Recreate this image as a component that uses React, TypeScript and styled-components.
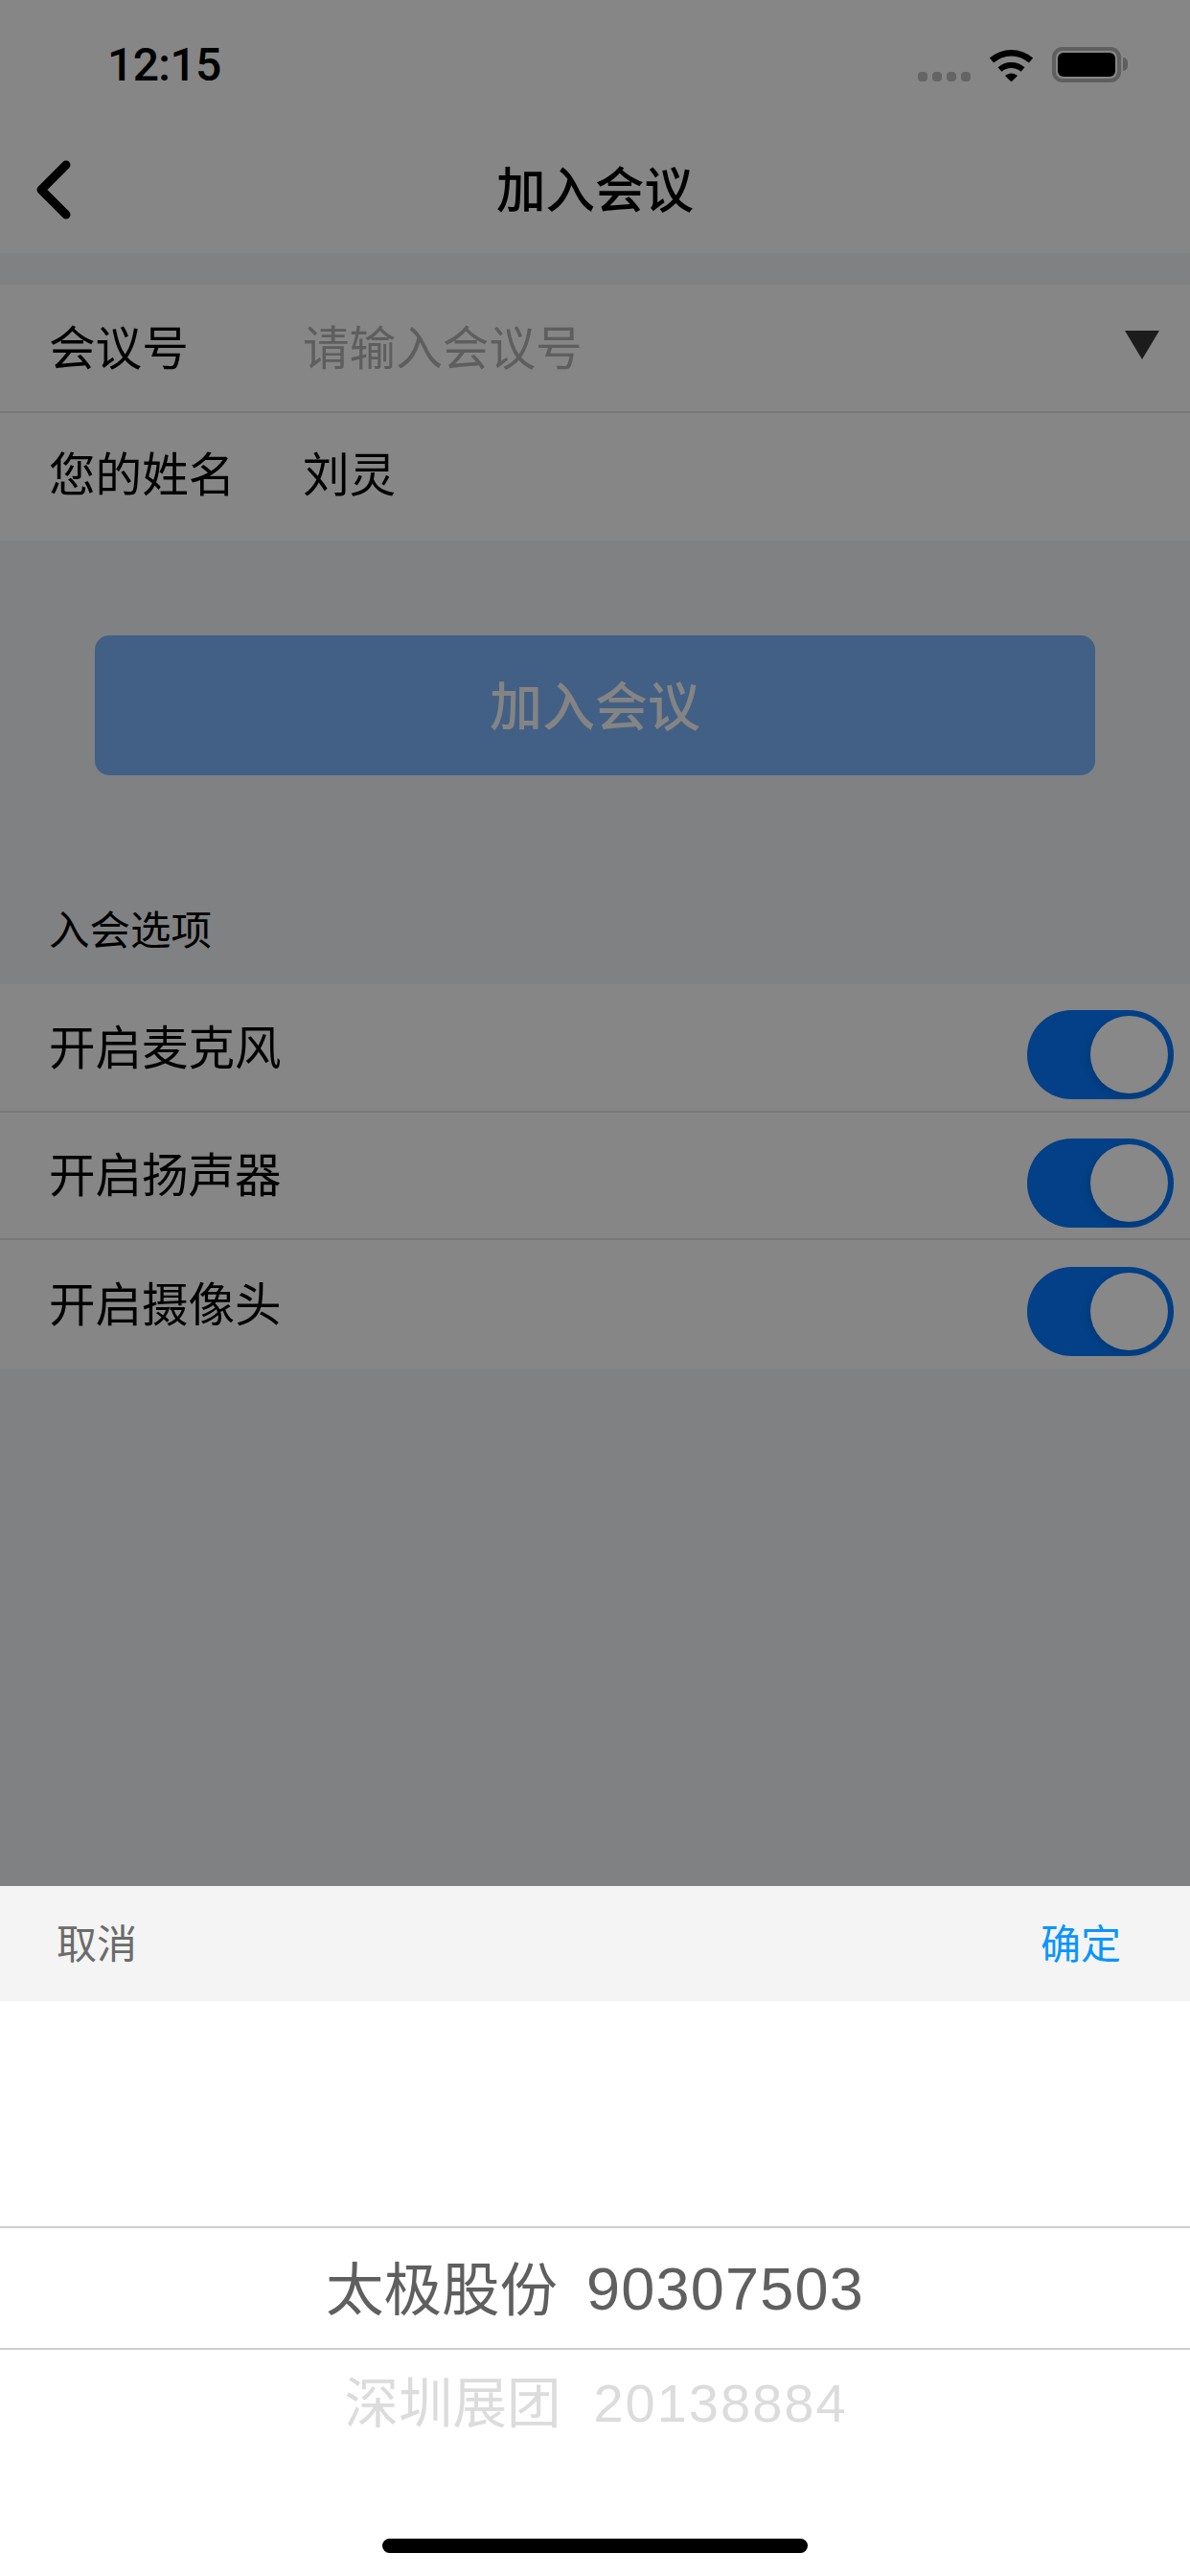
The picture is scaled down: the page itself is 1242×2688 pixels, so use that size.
import { FC } from "react";
import styled, { createGlobalStyle } from "styled-components";

const GlobalStyle = createGlobalStyle`
    html, body {
        margin: 0;
        padding: 0;
    }
    body {
        font-family: "Liberation Sans", "Noto Sans CJK SC", sans-serif;
    }
    * {
        box-sizing: border-box;
    }
`

const formRows = [
    { label: "会议号", value: "请输入会议号", placeholder: true, arrow: true },
    { label: "您的姓名", value: "刘灵", placeholder: false, arrow: false },
]

const optionRows = ["开启麦克风", "开启扬声器", "开启摄像头"]

const App: FC = () => {
    return (
        <Screen>
            <GlobalStyle />
            <Dimmed>
                <StatusBar>
                    <Time>12:15</Time>
                    <StatusIcons>
                        <SignalDots>
                            <Dot /><Dot /><Dot /><Dot />
                        </SignalDots>
                        <svg width="47" height="36" viewBox="0 0 47 36">
                            <path d="M3 14 C15 3.5 32 3.5 44 14" fill="none" stroke="#000" strokeWidth="6.5" />
                            <path d="M11.5 23.5 C18.5 17.5 28.5 17.5 35.5 23.5" fill="none" stroke="#000" strokeWidth="6" />
                            <path d="M17 30 C21 26.5 26 26.5 30 30 L23.5 36.5 Z" fill="#000" />
                        </svg>
                        <Battery>
                            <BatteryFill />
                            <BatteryNib />
                        </Battery>
                    </StatusIcons>
                </StatusBar>

                <NavBar>
                    <BackButton>
                        <svg width="38" height="64" viewBox="0 0 38 64">
                            <path d="M32 6 L6 32 L32 58" fill="none" stroke="#000" strokeWidth="9" strokeLinecap="round" strokeLinejoin="round" />
                        </svg>
                    </BackButton>
                    <Title>加入会议</Title>
                </NavBar>

                <Card>
                    {formRows.map((row) => (
                        <FormRow key={row.label}>
                            <FormLabel>{row.label}</FormLabel>
                            <FormValue $placeholder={row.placeholder}>{row.value}</FormValue>
                            {row.arrow && <DropArrow />}
                        </FormRow>
                    ))}
                </Card>

                <JoinButton>加入会议</JoinButton>

                <SectionTitle>入会选项</SectionTitle>

                <Card>
                    {optionRows.map((label) => (
                        <OptionRow key={label}>
                            <OptionLabel>{label}</OptionLabel>
                            <Toggle>
                                <Knob />
                            </Toggle>
                        </OptionRow>
                    ))}
                </Card>
            </Dimmed>

            <Sheet>
                <SheetBar>
                    <SheetAction>取消</SheetAction>
                    <SheetAction $primary>确定</SheetAction>
                </SheetBar>
                <Picker>
                    <SelectedItem>
                        <ItemName>太极股份</ItemName>
                        <ItemCode>90307503</ItemCode>
                    </SelectedItem>
                    <NextItem>
                        <NextName>深圳展团</NextName>
                        <NextCode>20138884</NextCode>
                    </NextItem>
                </Picker>
                <HomeIndicator />
            </Sheet>
        </Screen>
    )
}

export default App


const Screen = styled.div`
    width: 1242px;
    height: 2688px;
    display: flex;
    flex-direction: column;
    overflow: hidden;
    position: relative;
`

const Dimmed = styled.div`
    flex: 1;
    background-color: #808183;
`

const StatusBar = styled.div`
    height: 132px;
    background-color: #868686;
    display: flex;
    align-items: flex-start;
    justify-content: space-between;
    padding: 41px 72px 0 112px;
`

const Time = styled.div`
    font-family: Roboto, "Liberation Sans", sans-serif;
    font-size: 48px;
    line-height: 54px;
    font-weight: 500;
    letter-spacing: -0.6px;
    color: #000;
`

const StatusIcons = styled.div`
    display: flex;
    align-items: flex-start;
    padding-top: 8px;
    gap: 19px;
`

const SignalDots = styled.div`
    display: flex;
    gap: 5px;
    padding-top: 26px;
`

const Dot = styled.span`
    width: 10px;
    height: 10px;
    border-radius: 4px;
    background-color: #646464;
`

const Battery = styled.div`
    width: 72px;
    height: 37px;
    border: 4px solid #5f5f5f;
    border-radius: 11px;
    padding: 2px;
    position: relative;
`

const BatteryFill = styled.div`
    width: 100%;
    height: 100%;
    background-color: #000;
    border-radius: 6px;
`

const BatteryNib = styled.span`
    position: absolute;
    right: -11px;
    top: 7px;
    width: 5px;
    height: 14px;
    background-color: #5f5f5f;
    border-radius: 0 8px 8px 0;
`

const NavBar = styled.div`
    height: 132px;
    background-color: #868686;
    display: grid;
    grid-template-columns: 1fr auto 1fr;
    align-items: center;
`

const BackButton = styled.div`
    padding-left: 37px;
    display: flex;
    align-items: center;
`

const Title = styled.div`
    font-size: 51.5px;
    font-weight: 500;
    line-height: 60px;
    padding-top: 2px;
    color: #000;
`

const Card = styled.div`
    background-color: #868686;
    margin-top: 33px;
`

const FormRow = styled.div`
    height: 133.5px;
    display: flex;
    align-items: center;
    padding: 0 32px 6px 51px;
    border-bottom: 2px solid #797979;

    &:last-child {
        border-bottom: none;
        padding-bottom: 11px;
    }
`

const FormLabel = styled.div`
    width: 265px;
    font-size: 48.6px;
    color: #000;
`

const FormValue = styled.div<{ $placeholder: boolean }>`
    flex: 1;
    font-size: 48.6px;
    color: ${props => props.$placeholder ? "#5e5e5e" : "#000"};
`

const DropArrow = styled.span`
    width: 0;
    height: 0;
    border-left: 18px solid transparent;
    border-right: 18px solid transparent;
    border-top: 30px solid #1c1c1c;
`

const JoinButton = styled.div`
    margin: 99px 99px 0;
    height: 146px;
    padding-bottom: 6px;
    border-radius: 15px;
    background-color: #426085;
    color: #848484;
    font-size: 55px;
    font-weight: 500;
    display: flex;
    align-items: center;
    justify-content: center;
`

const SectionTitle = styled.div`
    margin-top: 104px;
    height: 114px;
    padding: 0 0 6px 51px;
    display: flex;
    align-items: center;
    font-size: 42.5px;
    color: #000;

    & + div {
        margin-top: 0;
    }
`

const OptionRow = styled.div`
    height: 133.5px;
    display: flex;
    align-items: center;
    justify-content: space-between;
    padding: 0 17px 6px 51px;
    border-bottom: 2px solid #797979;

    &:last-child {
        border-bottom: none;
    }
`

const OptionLabel = styled.div`
    font-size: 48.5px;
    color: #000;
`

const Toggle = styled.div`
    width: 153px;
    height: 93px;
    margin-top: 22px;
    padding: 6px;
    border-radius: 47px;
    background-color: #034087;
    display: flex;
    justify-content: flex-end;
`

const Knob = styled.div`
    width: 81px;
    height: 81px;
    border-radius: 50%;
    background-color: #888888;
    box-shadow: -2px 3px 8px rgba(0, 0, 0, 0.12);
`

const Sheet = styled.div`
    height: 720px;
    background-color: #fff;
    position: relative;
`

const SheetBar = styled.div`
    height: 120px;
    padding: 0 72px 6px 59px;
    background-color: #f4f4f4;
    display: flex;
    align-items: center;
    justify-content: space-between;
`

const SheetAction = styled.div<{ $primary?: boolean }>`
    font-size: 42px;
    color: ${props => props.$primary ? "#0a95ff" : "#6b6b6b"};
`

const Picker = styled.div`
    padding-top: 235px;
`

const SelectedItem = styled.div`
    height: 129px;
    border-top: 2px solid #cfcfcf;
    border-bottom: 2px solid #cfcfcf;
    display: flex;
    align-items: center;
    justify-content: center;
    color: #5f5f5f;
`

const ItemName = styled.span`
    font-size: 60.5px;
    padding-bottom: 6px;
`

const ItemCode = styled.span`
    font-size: 63px;
    letter-spacing: 1.2px;
    margin-left: 30px;
`

const NextItem = styled.div`
    height: 110px;
    padding-left: 2px;
    display: flex;
    align-items: center;
    justify-content: center;
    color: #dcdcdc;
`

const NextName = styled.span`
    font-size: 56.5px;
    padding-bottom: 8px;
`

const NextCode = styled.span`
    font-size: 56px;
    letter-spacing: 2px;
    margin-left: 34px;
`

const HomeIndicator = styled.div`
    position: absolute;
    left: 399px;
    bottom: 24px;
    width: 444px;
    height: 15px;
    border-radius: 8px;
    background-color: #000;
`
